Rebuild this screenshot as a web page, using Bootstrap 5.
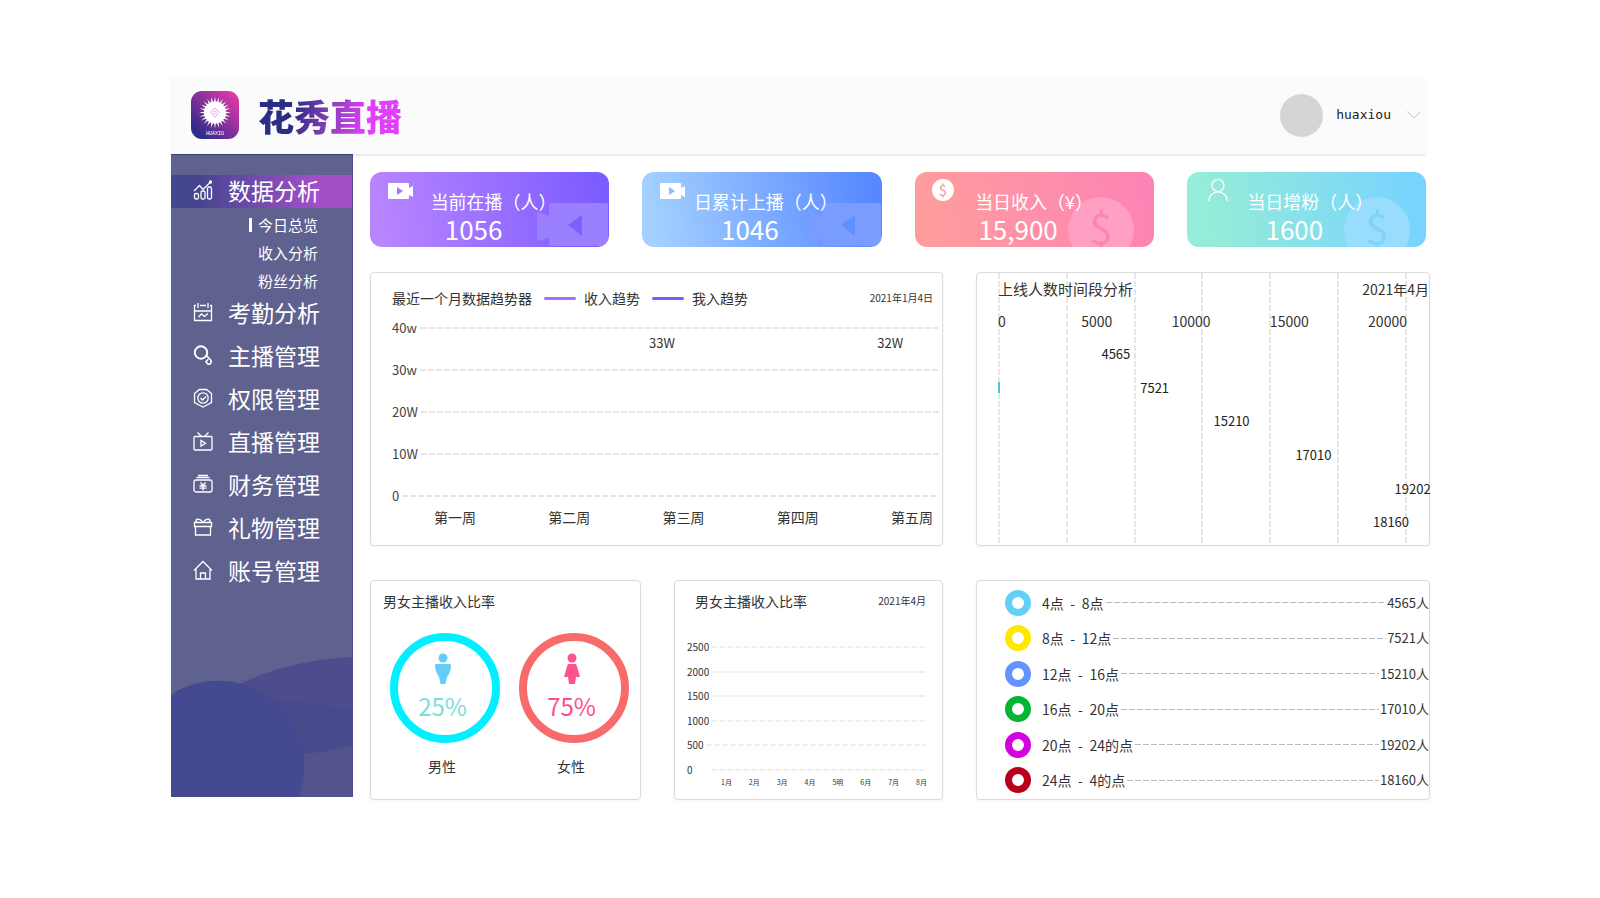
<!DOCTYPE html>
<html lang="zh-CN">
<head>
<meta charset="utf-8">
<meta name="viewport" content="width=device-width, initial-scale=1">
<title>花秀直播</title>
<link href="https://cdn.jsdelivr.net/npm/bootstrap@5.3.0/dist/css/bootstrap.min.css" rel="stylesheet">
<style>
  body { font-family: "Noto Sans CJK SC", sans-serif; font-size: 14px; line-height: 20px; color: #333; background: #fff; }
  .shell { padding: 77px 170px 32px 171px; }

  .topbar { height: 77px; margin-right: 4px; padding: 0 5px 1px 20px; background: #fbfbfb; box-shadow: 0 2px 2px #e9e9e9; }
  .brand { gap: 19px; }
  .brand-name { font-size: 36px; line-height: 48px; font-weight: 900; background: linear-gradient(100deg, #2b2c86 25%, #8a3fb5 50%, #e040fb 75%); -webkit-background-clip: text; background-clip: text; color: transparent; }
  .avatar { width: 43px; height: 43px; margin-right: 13px; background: #d5d5d5; }
  .user-btn { font-family: "DejaVu Sans Mono", monospace; font-size: 13px; color: #222; }

  .sidebar { width: 182px; padding-top: 20px; margin-bottom: 3px; background: #5f618f; border-top: 1px solid #3d3f7f; border-right: 1px solid #4a4c8c; }
  .side-link { display: flex; align-items: center; height: 38px; margin-bottom: 5px; padding: 0 0 4px 22px; gap: 15px; color: #fff; font-size: 23px; line-height: 32px; text-decoration: none; }
  .side-link svg { width: 20px; height: 20px; fill: none; stroke: #fff; stroke-width: 1.3; flex: none; }
  .side-link.current { height: 33px; margin-bottom: 3px; background: linear-gradient(90deg, #44468f 15%, #a24fc8 80%); }
  .sub-link { display: flex; align-items: center; justify-content: flex-end; height: 28px; padding: 0 34px 1px 0; gap: 6px; color: #fff; font-size: 15px; text-decoration: none; }
  .sub-link.current::before { content: ""; width: 3px; height: 14px; background: #fff; }

  .board { padding: 18px 0 0 17px; }
  .stats { display: grid; grid-template-columns: repeat(4, 1fr); gap: 33px; margin-right: 4px; }
  .stat { position: relative; height: 75px; padding-top: 16px; border-radius: 12px; overflow: hidden; color: #fff; text-align: center; }
  .stat-label { position: relative; font-size: 18px; line-height: 27px; padding-left: 8px; white-space: nowrap; }
  .stat-value { position: relative; font-size: 26px; line-height: 28px; padding-right: 32px; }
  .stat-icon { position: absolute; left: 17px; top: 6px; }
  .stat-mark { position: absolute; right: 0; bottom: 0; }
  .s-purple { background: linear-gradient(80deg, #b985ff 5%, #7c5cff 95%); }
  .s-blue { background: linear-gradient(80deg, #a4d1ff 5%, #5788ff 95%); }
  .s-pink { background: linear-gradient(80deg, #ff9d9d 5%, #fc84b4 95%); }
  .s-mint { background: linear-gradient(80deg, #95ecd8 10%, #78d3ff 95%); }

  .panels { display: grid; gap: 34px 33px; grid-template-columns: 271fr 269fr 454fr; grid-template-rows: 274px 220px; margin-top: 25px; }
  .panel { border: 1px solid #dcdcdc; border-radius: 4px; background: #fff; box-shadow: 0 1px 3px #f4f4f4; min-width: 0; }
  .small-date { font-size: 10px; }
  .trend { grid-column: span 2; padding: 16px 3px 0 21px; }
  .trend-head { height: 18px; padding-right: 6px; }
  .key-line { width: 32px; height: 3px; border-radius: 2px; margin: 0 8px 0 12px; }
  .dash { height: 2px; background: repeating-linear-gradient(90deg, #e6e6e6 0 6px, transparent 6px 8px); }
  .axis-row { display: flex; align-items: center; height: 42px; gap: 3px; font-size: 13px; color: #444; }
  .axis-row.base { height: 20px; margin-top: 11px; }
  .weeks { padding: 1px 6px 0 42px; }
  .points { display: flex; font-size: 13px; padding-top: 26px; }

  .stack { display: grid; }
  .stack > * { grid-area: 1 / 1; }
  .vlines { display: flex; justify-content: space-between; padding: 0 22px 0 21px; }
  .vlines i { width: 2px; background: repeating-linear-gradient(180deg, #e6e6e6 0 6px, transparent 6px 8px); }
  .hours { padding: 6px 0 0 21px; min-width: 0; }
  .hours-title { font-size: 15px; }
  .hours-scale { padding: 12px 22px 6px 0; }
  .bars { display: flex; flex-direction: column; height: 202px; }
  .bar-row { display: flex; align-items: center; flex: 1; font-size: 13px; color: #222; white-space: nowrap; }
  .bar-row i { flex: none; height: 11px; }
  .bar-row .started { border-left: 2px solid #4cc3e0; }

  .ratio-head { padding: 10px 16px 0 12px; }
  .donuts { padding: 22px 11px 0 19px; }
  .donut { width: 110px; height: 110px; border: 8px solid; border-radius: 50%; display: flex; flex-direction: column; align-items: center; gap: 5px; padding: 12px 5px 0 0; font-size: 24px; line-height: 32px; }
  .donut-name { padding: 13px 6px 0 0; text-align: center; }
  .tiny-rows { display: flex; flex-direction: column; justify-content: space-between; height: 135px; margin: 30px 16px 0 12px; }
  .tiny-row { display: flex; align-items: center; gap: 2px; font-size: 10px; line-height: 12px; }
  .tiny-row .dash { background: repeating-linear-gradient(90deg, #efefef 0 6px, transparent 6px 8px); }
  .months { font-size: 7px; line-height: 10px; padding: 1px 15px 0 46px; }
  .legend-list { display: flex; flex-direction: column; height: 217px; padding: 4px 0 0 28px; margin: 0; list-style: none; }
  .legend-list li { display: flex; align-items: center; flex: 1; }
  .legend-list li > :last-child { font-size: 13px; }
  .ring { width: 26px; height: 26px; border: 7px solid; border-radius: 50%; margin-right: 11px; flex: none; }
  .sep { display: inline-block; width: 18px; text-align: center; }
  .legend-list .dash { height: 1px; margin: 0 1px 0 2px; background: repeating-linear-gradient(90deg, #bbb 0 6px, transparent 6px 8px); }
</style>
</head>
<body>
<div class="shell">
  <header class="topbar d-flex align-items-center justify-content-between">
    <div class="brand d-flex align-items-center">
      <svg width="48" height="48" viewBox="0 0 48 48">
        <defs>
          <linearGradient id="lg" x1="0" y1="1" x2="1" y2="0"><stop offset=".15" stop-color="#312b8c"/><stop offset=".9" stop-color="#dd38a8"/></linearGradient>
          <path id="petal" d="M24 5.500 L26.600 21.500 L24 37.500 L21.400 21.500Z"/>
        </defs>
        <rect width="48" height="48" rx="11" fill="url(#lg)"/>
        <g fill="#fff">
          <use href="#petal"/><use href="#petal" transform="rotate(15 24 21.5)"/><use href="#petal" transform="rotate(30 24 21.5)"/><use href="#petal" transform="rotate(45 24 21.5)"/><use href="#petal" transform="rotate(60 24 21.5)"/><use href="#petal" transform="rotate(75 24 21.5)"/><use href="#petal" transform="rotate(90 24 21.5)"/><use href="#petal" transform="rotate(105 24 21.5)"/><use href="#petal" transform="rotate(120 24 21.5)"/><use href="#petal" transform="rotate(135 24 21.5)"/><use href="#petal" transform="rotate(150 24 21.5)"/><use href="#petal" transform="rotate(165 24 21.5)"/>
          <circle cx="24" cy="21.5" r="11"/>
        </g>
        <path d="M24 17l4.500 4.500-4.500 4.500-4.500-4.500z" fill="none" stroke="#e9a0dc"/><circle cx="24" cy="21.500" r="1.500" fill="none" stroke="#e9a0dc" stroke-width=".8"/>
        <text x="24" y="44" fill="#fff" font-size="5" text-anchor="middle" font-family="Liberation Mono, monospace">HUAXIU</text>
      </svg>
      <span class="brand-name">花秀直播</span>
    </div>
    <div class="d-flex align-items-center">
      <span class="avatar rounded-circle"></span>
      <button type="button" class="user-btn btn p-0 border-0 d-flex align-items-center">huaxiou
        <svg class="ms-3" width="14" height="8" viewBox="0 0 14 8" fill="none" stroke="#c4c4c4"><path d="M.5.5 7 7 13.500.5"/></svg>
      </button>
    </div>
  </header>

  <div class="d-flex">
    <nav class="sidebar d-flex flex-column flex-shrink-0">
      <a href="#" class="side-link current"><svg viewBox="0 0 20 20"><rect x="1.500" y="13.500" width="4" height="5.500" rx="1.500"/><rect x="8" y="11" width="4" height="8" rx="1.500"/><rect x="14.500" y="7" width="4" height="12" rx="1.500"/><path d="M1 11l5.500-5.500 3.500 4 7.500-7.500"/><circle cx="17.500" cy="2" r="1"/></svg>数据分析</a>
      <a href="#" class="sub-link current">今日总览</a>
      <a href="#" class="sub-link">收入分析</a>
      <a href="#" class="sub-link">粉丝分析</a>
      <a href="#" class="side-link"><svg viewBox="0 0 20 20"><path d="M3 3.500H1.500V18.500h17V3.500H17M7 3.500h6M1.500 9h17M5 1v5M15 1v5M5.500 15l3-3 3 2.500 3.500-3"/></svg>考勤分析</a>
      <a href="#" class="side-link"><svg viewBox="0 0 20 20"><circle cx="8" cy="7.500" r="6.200" stroke-width="2"/><path d="M13.500 10.500l4.500 5c1 2.500-1.500 4.500-3.500 3.300L13 16.500l2.200-2.200" stroke-width="1.600"/></svg>主播管理</a>
      <a href="#" class="side-link"><svg viewBox="0 0 20 20"><path d="M6.500 1.500h7l5 4v9l-4.500 2.500-4 2-4-2-4.500-2.500v-9z"/><circle cx="10" cy="10" r="5.200"/><path d="M7.500 10l2 2 3.500-3.500"/></svg>权限管理</a>
      <a href="#" class="side-link"><svg viewBox="0 0 20 20"><rect x="1" y="5.500" width="18" height="13.500" rx="1"/><path d="M4.500 1.500l4 4M15.500 1.500l-4 4M8 9.500v5.500l4.500-2.700z"/></svg>直播管理</a>
      <a href="#" class="side-link"><svg viewBox="0 0 20 20"><path d="M5 1.500h10M3.500 3.500h13"/><rect x="1" y="6" width="18" height="12" rx="2"/><path d="M7.500 8.500l2.500 3 2.500-3M10 11.500v5M6.500 12h7M6.500 14.200h7"/></svg>财务管理</a>
      <a href="#" class="side-link"><svg viewBox="0 0 20 20"><path d="M1.500 5.500h17v4h-17zM2.500 9.500v8.500h15V9.500M10 5.500C7 1 3 1.500 3 3.500s2 2 3 2M10 5.500C13 1 17 1.500 17 3.500s-2 2-3 2"/></svg>礼物管理</a>
      <a href="#" class="side-link"><svg viewBox="0 0 20 20"><path d="M1 10.500L10 1.500l9 9M3 9v10h14V9M7.500 19v-6h5v6"/></svg>账号管理</a>
      <svg class="mt-auto w-100 d-block" viewBox="0 0 182 142">
        <path d="M128 95L182 86V142H120z" fill="#53548d"/>
        <path d="M70 28Q115 5 182 1V90Q150 98 130 98z" fill="#4d4c8c"/>
        <path d="M27 71C27 54 60 45 102 45C135 45 165 50 182 56V90C150 98 120 100 98 100C60 100 27 88 27 71z" fill="#494a8c"/>
        <path d="M0 39Q22 25 48 25C96 25 134 62 134 110Q134 128 129 142H0z" fill="#45498f"/>
      </svg>
    </nav>

    <main class="board flex-grow-1">
      <section class="stats">
        <div class="stat s-purple">
          <svg class="stat-mark" width="75" height="45" viewBox="0 0 75 45"><path d="M17 1h55q2 0 2 2v40q0 1-2 1H17q-2 0-2-2v-6L3 39V10l12 4V3q0-2 2-2z" fill="#9a80ff"/><path d="M34 23l14-10v21z" fill="#7f5dff"/></svg>
          <svg class="stat-icon" width="28" height="26" viewBox="0 0 28 26"><path d="M2 5h19q1 0 1 1v4l4-2v11l-4-2v3q0 1-1 1H2q-1 0-1-1V6q0-1 1-1z" fill="#fff"/><path d="M10 9l6 4-6 4z" fill="#a975ff"/></svg>
          <div class="stat-label">当前在播（人）</div><div class="stat-value">1056</div>
        </div>
        <div class="stat s-blue">
          <svg class="stat-mark" width="75" height="45" viewBox="0 0 75 45"><path d="M17 1h55q2 0 2 2v40q0 1-2 1H17q-2 0-2-2v-6L3 39V10l12 4V3q0-2 2-2z" fill="#7b9cff"/><path d="M34 23l14-10v21z" fill="#5f90ff"/></svg>
          <svg class="stat-icon" width="28" height="26" viewBox="0 0 28 26"><path d="M2 5h19q1 0 1 1v4l4-2v11l-4-2v3q0 1-1 1H2q-1 0-1-1V6q0-1 1-1z" fill="#fff"/><path d="M10 9l6 4-6 4z" fill="#8cbcff"/></svg>
          <div class="stat-label">日累计上播（人）</div><div class="stat-value pe-4">1046</div>
        </div>
        <div class="stat s-pink">
          <svg class="stat-mark" width="87" height="51" viewBox="0 0 87 51"><circle cx="34" cy="34" r="33" fill="#ff9fc4"/><text x="34" y="48" font-size="42" text-anchor="middle" fill="#fd86ae" font-family="Noto Sans CJK SC, sans-serif">$</text></svg>
          <svg class="stat-icon" width="24" height="24" viewBox="0 0 24 24"><circle cx="11" cy="12" r="11" fill="#fff"/><text x="11" y="17.500" font-size="15" text-anchor="middle" fill="#ff8f9c" font-family="Noto Sans CJK SC, sans-serif">$</text></svg>
          <div class="stat-label pe-2">当日收入（¥）</div><div class="stat-value">15,900</div>
        </div>
        <div class="stat s-mint">
          <svg class="stat-mark" width="83" height="51" viewBox="0 0 83 51"><circle cx="34" cy="34" r="33" fill="#98ddfe"/><text x="34" y="48" font-size="42" text-anchor="middle" fill="#7fd5f8" font-family="Noto Sans CJK SC, sans-serif">$</text></svg>
          <svg class="stat-icon" width="28" height="24" viewBox="0 0 28 24" fill="none" stroke="#fff" stroke-width="1.200"><circle cx="14" cy="7.500" r="6"/><path d="M4.500 23c1-12 18-12 19 0"/></svg>
          <div class="stat-label">当日增粉（人）</div><div class="stat-value pe-4">1600</div>
        </div>
      </section>

      <section class="panels">
        <div class="panel trend">
          <div class="trend-head d-flex align-items-center">
            <span>最近一个月数据趋势器</span>
            <span class="key-line" style="background:#a86fff"></span><span>收入趋势</span>
            <span class="key-line" style="background:#7f57ff"></span><span>我入趋势</span>
            <span class="small-date ms-auto">2021年1月4日</span>
          </div>
          <div class="stack">
            <div>
              <div class="axis-row">40w<span class="dash flex-fill"></span></div>
              <div class="axis-row">30w<span class="dash flex-fill"></span></div>
              <div class="axis-row">20W<span class="dash flex-fill"></span></div>
              <div class="axis-row">10W<span class="dash flex-fill"></span></div>
              <div class="axis-row base">0<span class="dash flex-fill"></span></div>
            </div>
            <div class="points"><span style="margin-left:47%">33W</span><span style="margin-left:37%">32W</span></div>
          </div>
          <div class="weeks d-flex justify-content-between"><span>第一周</span><span>第二周</span><span>第三周</span><span>第四周</span><span>第五周</span></div>
        </div>

        <div class="panel stack">
          <div class="vlines"><i></i><i></i><i></i><i></i><i></i><i></i><i></i></div>
          <div class="hours">
            <div class="d-flex justify-content-between"><span class="hours-title">上线人数时间段分析</span><span>2021年4月</span></div>
            <div class="hours-scale d-flex justify-content-between"><span class="pe-3">0</span><span>5000</span><span>10000</span><span>15000</span><span>20000</span></div>
            <div class="bars">
              <div class="bar-row"><i style="width:24%"></i>4565</div>
              <div class="bar-row"><i class="started" style="width:33%"></i>7521</div>
              <div class="bar-row"><i style="width:50%"></i>15210</div>
              <div class="bar-row"><i style="width:69%"></i>17010</div>
              <div class="bar-row"><i style="width:92%"></i>19202</div>
              <div class="bar-row"><i style="width:87%"></i>18160</div>
            </div>
          </div>
        </div>

        <div class="panel">
          <div class="ratio-head">男女主播收入比率</div>
          <div class="donuts d-flex justify-content-between">
            <div>
              <div class="donut" style="border-color:#00f0ff;color:#7be0dc">
                <svg width="18" height="32" viewBox="0 0 18 32" fill="#63cdf8"><circle cx="9" cy="5" r="4.500"/><path d="M2 11h14q1 0 1 2c-.5 7-3 9-4 11l-1.500 7h-5L5 24C3.500 21 1.500 19 1 13q0-2 1-2z"/></svg>25%</div>
              <div class="donut-name">男性</div>
            </div>
            <div>
              <div class="donut" style="border-color:#f96b6b;color:#ff4d88">
                <svg width="18" height="32" viewBox="0 0 18 32" fill="#ff5390"><circle cx="9" cy="5" r="4.500"/><path d="M5 11h8l1.500 4L17 24h-4l-1 7H6l-1-7H1l2.500-9z"/></svg>75%</div>
              <div class="donut-name">女性</div>
            </div>
          </div>
        </div>

        <div class="panel">
          <div class="ratio-head d-flex justify-content-between align-items-center"><span class="ps-2">男女主播收入比率</span><span class="small-date">2021年4月</span></div>
          <div class="tiny-rows">
            <div class="tiny-row">2500<span class="dash flex-fill"></span></div>
            <div class="tiny-row">2000<span class="dash flex-fill"></span></div>
            <div class="tiny-row">1500<span class="dash flex-fill"></span></div>
            <div class="tiny-row">1000<span class="dash flex-fill"></span></div>
            <div class="tiny-row">500<span class="dash flex-fill"></span></div>
            <div class="tiny-row">0<span class="dash flex-fill ms-3"></span></div>
          </div>
          <div class="months d-flex justify-content-between"><span>1月</span><span>2月</span><span>3月</span><span>4月</span><span>5明</span><span>6月</span><span>7月</span><span>8月</span></div>
        </div>

        <div class="panel">
          <ul class="legend-list">
            <li><span class="ring" style="border-color:#63d0fa"></span>4点 <span class="sep">-</span> 8点<span class="dash flex-fill"></span><span>4565人</span></li>
            <li><span class="ring" style="border-color:#ffe700"></span>8点 <span class="sep">-</span> 12点<span class="dash flex-fill"></span><span>7521人</span></li>
            <li><span class="ring" style="border-color:#6493ff"></span>12点 <span class="sep">-</span> 16点<span class="dash flex-fill"></span><span>15210人</span></li>
            <li><span class="ring" style="border-color:#04b531"></span>16点 <span class="sep">-</span> 20点<span class="dash flex-fill"></span><span>17010人</span></li>
            <li><span class="ring" style="border-color:#d300e0"></span>20点 <span class="sep">-</span> 24的点<span class="dash flex-fill"></span><span>19202人</span></li>
            <li><span class="ring" style="border-color:#b8001c"></span>24点 <span class="sep">-</span> 4的点<span class="dash flex-fill"></span><span>18160人</span></li>
          </ul>
        </div>
      </section>
    </main>
  </div>
</div>
<script src="https://cdn.jsdelivr.net/npm/bootstrap@5.3.0/dist/js/bootstrap.bundle.min.js"></script>
</body>
</html>
